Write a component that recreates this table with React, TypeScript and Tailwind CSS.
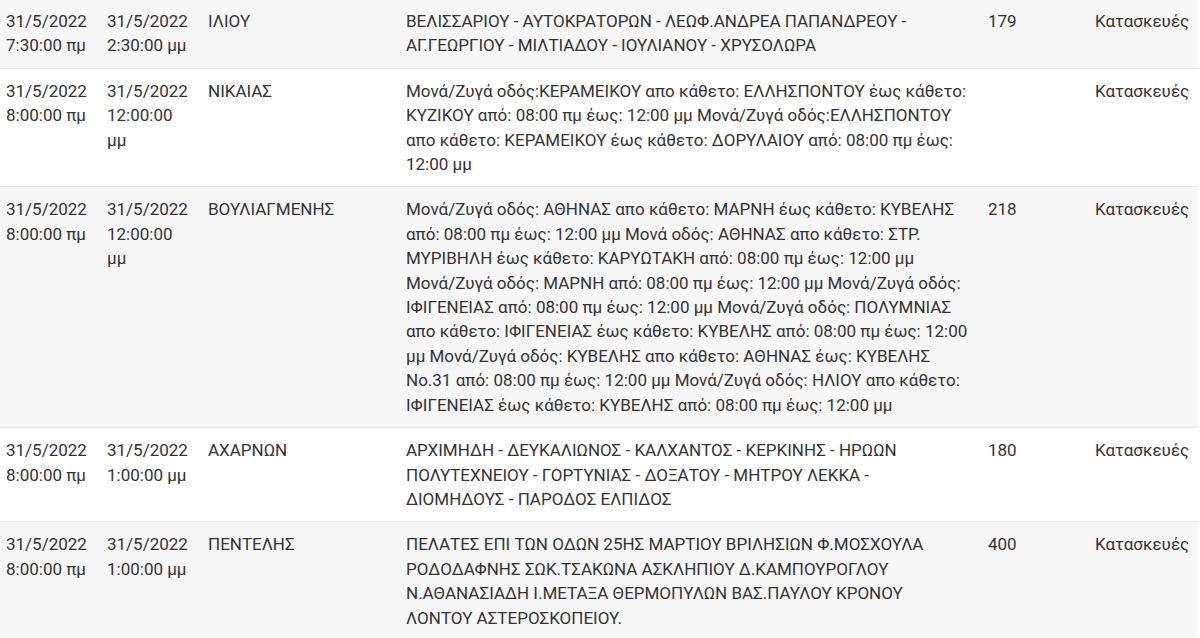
type Outage = {
  from: string;
  to: string;
  area: string;
  streets: string;
  customers: string;
  reason: string;
};

const outages: Outage[] = [
  {
    from: "31/5/2022 7:30:00 πμ",
    to: "31/5/2022 2:30:00 μμ",
    area: "ΙΛΙΟΥ",
    streets:
      "ΒΕΛΙΣΣΑΡΙΟΥ - ΑΥΤΟΚΡΑΤΟΡΩΝ - ΛΕΩΦ.ΑΝΔΡΕΑ ΠΑΠΑΝΔΡΕΟΥ - ΑΓ.ΓΕΩΡΓΙΟΥ - ΜΙΛΤΙΑΔΟΥ - ΙΟΥΛΙΑΝΟΥ - ΧΡΥΣΟΛΩΡΑ",
    customers: "179",
    reason: "Κατασκευές",
  },
  {
    from: "31/5/2022 8:00:00 πμ",
    to: "31/5/2022 12:00:00 μμ",
    area: "ΝΙΚΑΙΑΣ",
    streets:
      "Μονά/Ζυγά οδός:ΚΕΡΑΜΕΙΚΟΥ απο κάθετο: ΕΛΛΗΣΠΟΝΤΟΥ έως κάθετο: ΚΥΖΙΚΟΥ από: 08:00 πμ έως: 12:00 μμ Μονά/Ζυγά οδός:ΕΛΛΗΣΠΟΝΤΟΥ απο κάθετο: ΚΕΡΑΜΕΙΚΟΥ έως κάθετο: ΔΟΡΥΛΑΙΟΥ από: 08:00 πμ έως: 12:00 μμ",
    customers: "",
    reason: "Κατασκευές",
  },
  {
    from: "31/5/2022 8:00:00 πμ",
    to: "31/5/2022 12:00:00 μμ",
    area: "ΒΟΥΛΙΑΓΜΕΝΗΣ",
    streets:
      "Μονά/Ζυγά οδός: ΑΘΗΝΑΣ απο κάθετο: ΜΑΡΝΗ έως κάθετο: ΚΥΒΕΛΗΣ από: 08:00 πμ έως: 12:00 μμ Μονά οδός: ΑΘΗΝΑΣ απο κάθετο: ΣΤΡ. ΜΥΡΙΒΗΛΗ έως κάθετο: ΚΑΡΥΩΤΑΚΗ από: 08:00 πμ έως: 12:00 μμ Μονά/Ζυγά οδός: ΜΑΡΝΗ από: 08:00 πμ έως: 12:00 μμ Μονά/Ζυγά οδός: ΙΦΙΓΕΝΕΙΑΣ από: 08:00 πμ έως: 12:00 μμ Μονά/Ζυγά οδός: ΠΟΛΥΜΝΙΑΣ απο κάθετο: ΙΦΙΓΕΝΕΙΑΣ έως κάθετο: ΚΥΒΕΛΗΣ από: 08:00 πμ έως: 12:00 μμ Μονά/Ζυγά οδός: ΚΥΒΕΛΗΣ απο κάθετο: ΑΘΗΝΑΣ έως: ΚΥΒΕΛΗΣ No.31 από: 08:00 πμ έως: 12:00 μμ Μονά/Ζυγά οδός: ΗΛΙΟΥ απο κάθετο: ΙΦΙΓΕΝΕΙΑΣ έως κάθετο: ΚΥΒΕΛΗΣ από: 08:00 πμ έως: 12:00 μμ",
    customers: "218",
    reason: "Κατασκευές",
  },
  {
    from: "31/5/2022 8:00:00 πμ",
    to: "31/5/2022 1:00:00 μμ",
    area: "ΑΧΑΡΝΩΝ",
    streets:
      "ΑΡΧΙΜΗΔΗ - ΔΕΥΚΑΛΙΩΝΟΣ - ΚΑΛΧΑΝΤΟΣ - ΚΕΡΚΙΝΗΣ - ΗΡΩΩΝ ΠΟΛΥΤΕΧΝΕΙΟΥ - ΓΟΡΤΥΝΙΑΣ - ΔΟΞΑΤΟΥ - ΜΗΤΡΟΥ ΛΕΚΚΑ - ΔΙΟΜΗΔΟΥΣ - ΠΑΡΟΔΟΣ ΕΛΠΙΔΟΣ",
    customers: "180",
    reason: "Κατασκευές",
  },
  {
    from: "31/5/2022 8:00:00 πμ",
    to: "31/5/2022 1:00:00 μμ",
    area: "ΠΕΝΤΕΛΗΣ",
    streets:
      "ΠΕΛΑΤΕΣ ΕΠΙ ΤΩΝ ΟΔΩΝ 25ΗΣ ΜΑΡΤΙΟΥ ΒΡΙΛΗΣΙΩΝ Φ.ΜΟΣΧΟΥΛΑ ΡΟΔΟΔΑΦΝΗΣ ΣΩΚ.ΤΣΑΚΩΝΑ ΑΣΚΛΗΠΙΟΥ Δ.ΚΑΜΠΟΥΡΟΓΛΟΥ Ν.ΑΘΑΝΑΣΙΑΔΗ Ι.ΜΕΤΑΞΑ ΘΕΡΜΟΠΥΛΩΝ ΒΑΣ.ΠΑΥΛΟΥ ΚΡΟΝΟΥ ΛΟΝΤΟΥ ΑΣΤΕΡΟΣΚΟΠΕΙΟΥ.",
    customers: "400",
    reason: "Κατασκευές",
  },
];

// keep "Μονά/Ζυγά" together, the browser would otherwise break after the slash
const noSlashBreak = (s: string) => s.replace(/\//g, "/\u2060");

function Cell({
  children,
  wide = false,
}: {
  children: React.ReactNode;
  wide?: boolean;
}) {
  return (
    <td
      className={
        wide
          ? "pl-[6px] pr-[13px] py-[10px] align-top"
          : "pl-[6px] pr-[8px] py-[10px] align-top"
      }
    >
      {children}
    </td>
  );
}

export default function App() {
  return (
    <div className="w-[1200px] h-[638px] overflow-hidden bg-white">
      <table
        className="-mt-[2px] w-[1198px] table-fixed border-collapse text-[17px] leading-[24.4px] text-[#333333]"
        style={{ fontFamily: "Roboto, 'Noto Sans', sans-serif" }}
      >
        <colgroup>
          <col className="w-[101px]" />
          <col className="w-[101px]" />
          <col className="w-[198px]" />
          <col className="w-[582px]" />
          <col className="w-[107px]" />
          <col />
        </colgroup>
        <tbody>
          {outages.map((o, i) => (
            <tr
              key={i}
              className={
                i % 2 === 0
                  ? "bg-[#f7f7f7] border-t border-[#e9e9e9]"
                  : "bg-white border-t border-[#e9e9e9]"
              }
            >
              <Cell>{o.from}</Cell>
              <Cell>{o.to}</Cell>
              <Cell>{o.area}</Cell>
              <Cell wide>{noSlashBreak(o.streets)}</Cell>
              <Cell>{o.customers}</Cell>
              <Cell>{o.reason}</Cell>
            </tr>
          ))}
        </tbody>
      </table>
    </div>
  );
}
